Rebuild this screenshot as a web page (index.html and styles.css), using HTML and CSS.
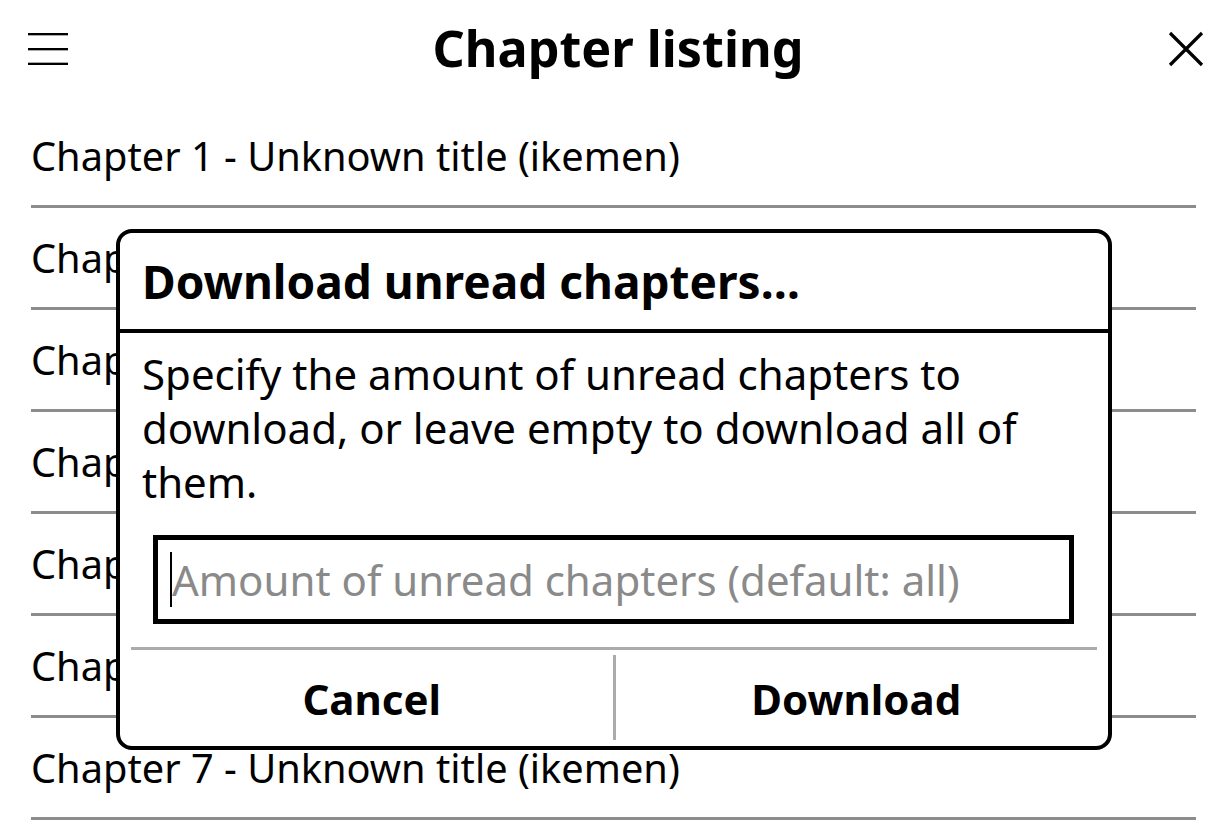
FILE: index.html
```html
<!DOCTYPE html>
<html>
<head>
<meta charset="utf-8">
<link rel="stylesheet" href="styles.css">
</head>
<body>
<div class="screen">
  <header class="topbar">
    <div class="menu-btn">
      <svg width="40" height="34" viewBox="0 0 40 34"><rect x="0" y="0" width="40" height="2" fill="#000"/><rect x="0" y="2" width="40" height="1" fill="#aaa"/><rect x="0" y="15" width="40" height="2" fill="#000"/><rect x="0" y="17" width="40" height="1" fill="#aaa"/><rect x="0" y="29" width="40" height="1" fill="#aaa"/><rect x="0" y="30" width="40" height="2" fill="#000"/></svg>
    </div>
    <h1 class="title">Chapter listing</h1>
    <div class="close-btn">
      <svg width="36" height="36" viewBox="0 0 36 36"><path d="M2 2 L34 34 M34 2 L2 34" stroke="#000" stroke-width="3.2" fill="none"/></svg>
    </div>
  </header>
  <ul class="chapters">
    <li class="chapter">Chapter 1 - Unknown title (ikemen)</li>
    <li class="chapter">Chapter 2 - Unknown title (ikemen)</li>
    <li class="chapter">Chapter 3 - Unknown title (ikemen)</li>
    <li class="chapter">Chapter 4 - Unknown title (ikemen)</li>
    <li class="chapter">Chapter 5 - Unknown title (ikemen)</li>
    <li class="chapter">Chapter 6 - Unknown title (ikemen)</li>
    <li class="chapter">Chapter 7 - Unknown title (ikemen)</li>
  </ul>
  <div class="dialog">
    <div class="dlg-title">Download unread chapters…</div>
    <div class="dlg-body">Specify the amount of unread chapters to download, or leave empty to download all of them.</div>
    <div class="dlg-input"><span class="cursor"></span><span class="placeholder">Amount of unread chapters (default: all)</span></div>
    <div class="dlg-sep"></div>
    <div class="dlg-buttons">
      <div class="btn">Cancel</div>
      <div class="vsep"></div>
      <div class="btn">Download</div>
    </div>
  </div>
</div>
</body>
</html>
```
FILE: styles.css
```css
html, body {
  margin: 0;
  padding: 0;
  background: #fff;
}
body {
  font-family: "Noto Sans", "DejaVu Sans", sans-serif;
  color: #000;
}
.screen {
  position: relative;
  width: 1228px;
  height: 820px;
  overflow: hidden;
}
.topbar {
  height: 106px;
  display: flex;
  align-items: flex-start;
  justify-content: space-between;
}
.menu-btn {
  margin-left: 28px;
  margin-top: 33px;
  width: 40px;
  height: 34px;
}
.menu-btn svg, .close-btn svg { display: block; }
.title {
  margin: 14px 0 0;
  font-size: 50.3px;
  font-weight: bold;
  line-height: 68px;
  flex: 1;
  text-align: center;
}
.close-btn {
  margin-right: 24px;
  margin-top: 31px;
  width: 36px;
  height: 36px;
}
.chapters {
  list-style: none;
  margin: 0;
  padding: 0 32px 0 31px;
}
.chapter {
  height: 99px;
  border-bottom: 3px solid #8c8c8c;
  display: flex;
  align-items: center;
  padding-left: 0;
  font-size: 39.75px;
  white-space: nowrap;
}
.dialog {
  position: absolute;
  left: 116px;
  top: 229px;
  width: 996px;
  box-sizing: border-box;
  border: 4px solid #000;
  border-radius: 16px;
  background: #fff;
}
.dlg-title {
  height: 100px;
  box-sizing: border-box;
  border-bottom: 4px solid #000;
  display: flex;
  align-items: center;
  padding: 0 22px;
  font-weight: bold;
  font-size: 46px;
}
.dlg-body {
  padding: 14px 22px 0;
  font-size: 42px;
  line-height: 54px;
}
.dlg-input {
  margin: 26px 34px 0 33px;
  height: 89px;
  box-sizing: border-box;
  border: 5px solid #000;
  display: flex;
  align-items: center;
  padding-left: 12px;
  font-size: 42px;
}
.cursor {
  width: 2px;
  height: 55px;
  background: #000;
}
.placeholder {
  color: #8a8a8a;
  white-space: nowrap;
}
.dlg-sep {
  margin: 23px 11px 0;
  height: 3px;
  background: #ababab;
}
.dlg-buttons {
  height: 96px;
  display: flex;
  margin: 0 11px;
}
.btn {
  flex: 1;
  display: flex;
  align-items: center;
  justify-content: center;
  font-weight: bold;
  font-size: 42px;
}
.vsep {
  width: 3px;
  margin: 5px 0 6px;
  background: #ababab;
}
```
